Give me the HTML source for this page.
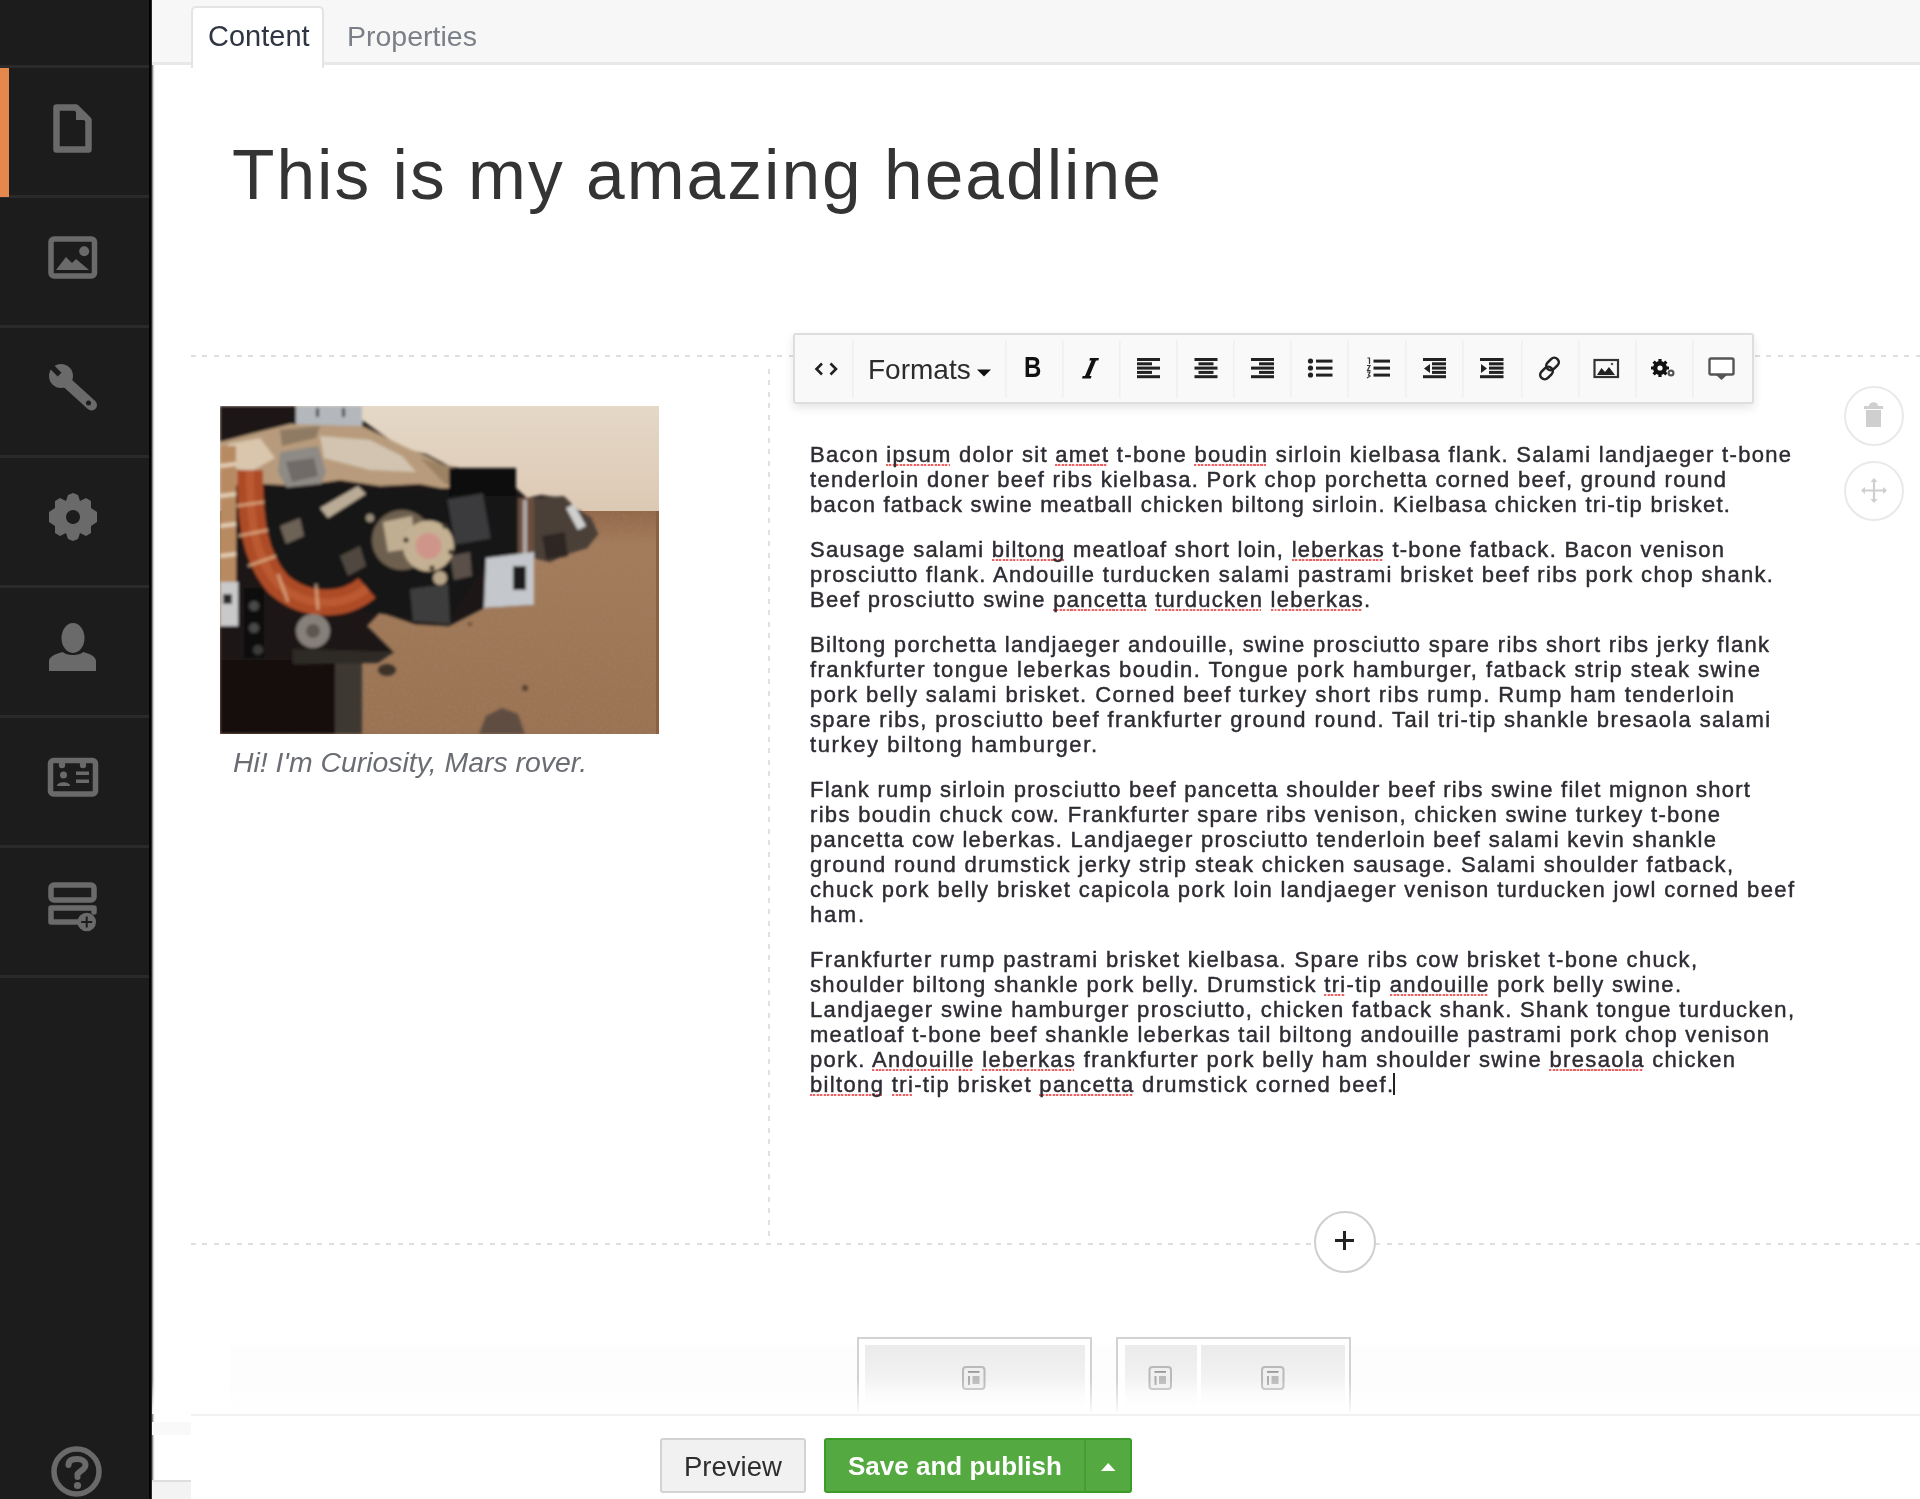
<!DOCTYPE html>
<html><head><meta charset="utf-8">
<style>
html,body{margin:0;padding:0;}
body{width:1920px;height:1499px;overflow:hidden;position:relative;background:#fff;font-family:"Liberation Sans",sans-serif;}
.abs{position:absolute;}
#sb{left:0;top:0;width:149px;height:1499px;background:#1c1c1c;}
#sbedge{left:149px;top:0;width:6px;height:1499px;background:linear-gradient(90deg,#030303 0,#030303 2px,#5a5a5a 3px,#bdbdbd 4px,#ececec 5px,rgba(255,255,255,0) 6px);}
.sep{position:absolute;left:0;width:149px;height:3px;background:#2a2a2a;}
#orange{left:0;top:68px;width:9px;height:129px;background:#e6884d;}
#hdr{left:152px;top:0;width:1768px;height:62px;background:#f7f7f7;border-bottom:3px solid #e8e8e8;}
#tab{left:191px;top:6px;width:129px;height:60px;background:#fff;border:2px solid #e4e4e4;border-bottom:none;border-radius:5px 5px 0 0;}
.tabt{position:absolute;top:20px;font-size:29px;line-height:32px;white-space:nowrap;}
#headline{left:232px;top:134px;font-size:69.5px;line-height:82px;color:#343434;white-space:nowrap;letter-spacing:2.0px;}
.hdash{position:absolute;height:2px;background:repeating-linear-gradient(90deg,#dfdfdf 0 5px,transparent 5px 11.5px);}
.vdash{position:absolute;width:2px;background:repeating-linear-gradient(180deg,#e0e0e0 0 5px,transparent 5px 11.5px);}
#caption{left:233px;top:745px;font-size:28.4px;line-height:34px;font-style:italic;color:#6a6d72;white-space:nowrap;}
#toolbar{left:793px;top:333px;width:957px;height:67px;border-radius:3px;background:#f9f9f9;border:2px solid #dedede;box-shadow:0 4px 10px rgba(0,0,0,0.10);}
.tbsep{position:absolute;top:6px;width:2px;height:58px;background:#f0f0f0;}
.txt{position:absolute;left:810px;font-size:22px;line-height:25px;color:#2f2b33;white-space:nowrap;-webkit-text-stroke:0.45px #2f2b33;}
.sp{background-image:repeating-linear-gradient(90deg,rgba(232,70,70,0.85) 0 2px,rgba(255,160,160,0.5) 2px 3.5px);background-size:calc(100% - 2px) 2px;background-repeat:no-repeat;background-position:0 22px;}
.circ{position:absolute;border-radius:50%;border:2px solid #e9e9e9;background:#fff;box-sizing:border-box;}
</style></head>
<body><div id="wrap" style="position:absolute;left:0;top:0;width:1920px;height:1499px;filter:blur(0.7px);">
<!-- sidebar -->
<div id="sb" class="abs"></div>
<div id="sbedge" class="abs"></div>
<div class="sep" style="top:65px"></div>
<div class="sep" style="top:195px"></div>
<div class="sep" style="top:325px"></div>
<div class="sep" style="top:455px"></div>
<div class="sep" style="top:585px"></div>
<div class="sep" style="top:715px"></div>
<div class="sep" style="top:845px"></div>
<div class="sep" style="top:975px"></div>
<div id="orange" class="abs"></div>
<svg class="abs" style="left:0;top:0" width="149" height="1499" viewBox="0 0 149 1499">
<g fill="none" stroke="#6a6a6a" stroke-linejoin="round" stroke-linecap="round">
<!-- document -->
<path d="M56.5,107.5 L76,107.5 L88.5,120 L88.5,149.5 L56.5,149.5 Z" stroke-width="6.5"/>
<!-- image -->
<rect x="51" y="239" width="43.5" height="37" rx="3" stroke-width="5.5"/>
<!-- gear hole via stroke trick not used -->
<!-- card -->
<rect x="50.5" y="760.5" width="45" height="33.5" rx="3" stroke-width="5.5"/>
<!-- layout -->
<rect x="51" y="885" width="43" height="15" rx="3" stroke-width="5.5"/>
<path d="M77,922 L51,922 L51,908 L94,908 L94,912" stroke-width="5.5"/>
<!-- help -->
<circle cx="76.5" cy="1471.5" r="22.5" stroke-width="5.5"/>
<path d="M68.5,1465 C68.5,1460.5 72.5,1459 77,1459 C82,1459 85.5,1461.5 85.5,1465 C85.5,1469.5 80,1470.5 77.5,1474 L77.5,1477" stroke-width="6"/>
</g>
<g fill="#6a6a6a">
<path d="M76,104.5 L91.5,120 L76,120 Z"/>
<!-- image inner -->
<path d="M56,270 L66,257 L72,263 L76,259 L89,270 Z"/>
<circle cx="84.2" cy="251.2" r="5"/>
<!-- wrench -->
<circle cx="61" cy="376" r="12"/>
<path d="M64,380 L91.5,405" stroke="#6a6a6a" stroke-width="11" stroke-linecap="round"/>
<rect x="58.3" y="361" width="5.4" height="13" fill="#1c1c1c" transform="rotate(-45 61 376)"/>
<circle cx="88.5" cy="403" r="2.5" fill="#1c1c1c"/>
<!-- gear -->
<path fill-rule="evenodd" d="M73,493 L78,495 L80,501 L86,498 L91,501 L91,508 L97,512 L97,522 L91,526 L91,533 L86,536 L80,533 L78,539 L73,541 L68,539 L66,533 L60,536 L55,533 L55,526 L49,522 L49,512 L55,508 L55,501 L60,498 L66,501 L68,495 Z M73,510 A7,7 0 1,0 73.01,510 Z"/>
<!-- user -->
<ellipse cx="73" cy="638" rx="11.5" ry="15"/>
<path d="M49,671 L49,661 C49,656 58,653 63,652 C66,656 80,656 83,652 C88,653 96,656 96,661 L96,671 Z"/>
<!-- card inner -->
<circle cx="62" cy="765" r="3.2"/><circle cx="83" cy="765" r="3.2"/>
<circle cx="63.5" cy="775" r="3.5"/>
<path d="M57,786 C57,781 70,781 70,786 Z"/>
<rect x="76" y="771.5" width="13" height="3.5"/>
<rect x="76" y="779.5" width="13" height="3.5"/>
<!-- layout circle -->
<circle cx="86.7" cy="922" r="9.3"/>
<circle cx="77.5" cy="1485.5" r="3.6"/>
</g>
<path d="M86.7,916.5 L86.7,927.5 M81.2,922 L92.2,922" stroke="#1c1c1c" stroke-width="2"/>
</svg>


<!-- header -->
<div id="hdr" class="abs"></div>
<div id="tab" class="abs"></div>
<div class="tabt" style="left:208px;color:#2f3542;">Content</div>
<div class="tabt" style="left:347px;color:#7b7f87;font-size:28.5px;">Properties</div>

<!-- headline -->
<div id="headline" class="abs">This is my amazing headline</div>

<!-- grid lines -->
<div class="hdash" style="left:191px;top:355px;width:1729px;"></div>
<div class="hdash" style="left:191px;top:1243px;width:1729px;"></div>
<div class="vdash" style="left:768px;top:369px;height:868px;"></div>

<!-- image placeholder -->
<svg class="abs" style="left:220px;top:406px" width="439" height="328" viewBox="0 0 439 328">
<defs>
<linearGradient id="sky" x1="0" y1="0" x2="0" y2="1"><stop offset="0" stop-color="#e5d8c7"/><stop offset="1" stop-color="#dcc9b4"/></linearGradient>
<linearGradient id="gnd" x1="0" y1="0" x2="0" y2="1"><stop offset="0" stop-color="#93694a"/><stop offset="0.15" stop-color="#a37c5c"/><stop offset="1" stop-color="#9a7353"/></linearGradient>
<filter id="bl" x="-5%" y="-5%" width="110%" height="110%"><feGaussianBlur stdDeviation="1.5"/></filter>
<filter id="noise" x="0" y="0" width="100%" height="100%"><feTurbulence type="fractalNoise" baseFrequency="0.35" numOctaves="2" seed="3"/><feColorMatrix values="0 0 0 0 0.35  0 0 0 0 0.24  0 0 0 0 0.16  0 0 0 -1.4 0.75"/></filter>
<clipPath id="ic"><rect width="439" height="328"/></clipPath>
</defs>
<g clip-path="url(#ic)">
<rect width="439" height="106" fill="url(#sky)"/>
<rect y="105" width="439" height="223" fill="url(#gnd)"/>
<rect y="105" width="439" height="223" filter="url(#noise)" opacity="0.55"/>
<rect x="436" y="105" width="3" height="223" fill="#8d6040"/>
<g filter="url(#bl)">
<ellipse cx="167" cy="264" rx="9" ry="6" fill="#3d3028"/>
<circle cx="305" cy="282" r="3" fill="#5a4030"/><circle cx="250" cy="218" r="2" fill="#6a4c38"/>
<!-- main dark mass -->
<path d="M0,0 L142,0 L142,14 L160,27 L183,43 L206,48 L229,60 L275,69 L296,82 L307,92 L321,89 L344,92 L357,103 L371,112 L378,128 L367,142 L344,149 L330,156 L314,152 L314,199 L264,202 L229,220 L195,218 L160,206 L147,220 L174,247 L142,254 L142,328 L0,328 Z" fill="#1d1815"/>
<!-- gray box top -->
<rect x="76" y="0" width="66" height="22" fill="#b4b8bc"/>
<rect x="96" y="2" width="3" height="9" fill="#3a3a3a"/><rect x="122" y="2" width="3" height="9" fill="#3a3a3a"/>
<!-- tan band top of arm -->
<path d="M0,36 L30,28 L70,18 L142,20 L183,40 L206,50 L229,62 L255,70 L240,86 L200,78 L160,80 L120,74 L80,80 L45,78 L0,80 Z" fill="#b89b7c"/>
<path d="M8,38 L40,32 L55,52 L30,66 L6,60 Z" fill="#d9c6ad"/>
<path d="M100,30 L150,34 L182,50 L196,66 L150,64 L104,52 Z" fill="#d2c4b0"/>
<path d="M200,52 L250,66 L262,80 L225,78 Z" fill="#9c8264"/>
<path d="M60,24 L100,20 L96,32 L62,40 Z" fill="#8f7a63"/>
<!-- camera mesh -->
<path d="M60,46 L98,40 L106,66 L96,90 L70,88 L58,66 Z" fill="#8e8a85"/>
<path d="M66,56 L94,52 L98,70 L72,76 Z" fill="#6f6b67"/>
<!-- dark interior -->
<path d="M42,84 L100,78 L160,84 L229,82 L300,90 L314,152 L264,160 L232,212 L195,212 L150,206 L100,200 L42,180 Z" fill="#181412"/>
<path d="M100,102 L138,80 L146,88 L108,112 Z" fill="#b9ab96"/>
<rect x="229" y="62" width="67" height="28" fill="#0f0d0c"/>
<rect x="231" y="90" width="36" height="46" fill="#3a3a3c" transform="rotate(-10 249 113)"/>
<!-- head housing and lens -->
<ellipse cx="182" cy="134" rx="30" ry="30" fill="#6e604f"/>
<path d="M60,120 L80,112 L84,130 L66,138 Z" fill="#6d6257"/><path d="M120,150 L140,140 L146,160 L128,170 Z" fill="#4f4740"/><circle cx="150" cy="112" r="4" fill="#9a8d7a"/><path d="M230,150 L250,146 L252,170 L234,174 Z" fill="#5a5048"/>
<path d="M163,116 L192,110 L195,142 L168,146 Z" fill="#bfae92"/>
<circle cx="208.5" cy="140" r="25.5" fill="#c4b193"/>
<circle cx="208.5" cy="140" r="13" fill="#cf958a"/>
<circle cx="186" cy="134" r="2.6" fill="#3d342b"/><circle cx="231" cy="146" r="2.6" fill="#3d342b"/><circle cx="212" cy="162" r="2.6" fill="#3d342b"/><circle cx="225" cy="120" r="2.6" fill="#3d342b"/>
<circle cx="220" cy="172" r="7" fill="#b8a68a"/>
<!-- right dark with copper cylinder -->
<rect x="298" y="92" width="16" height="62" fill="#6a4e3c"/>
<rect x="303" y="94" width="4" height="58" fill="#c4c4c4" opacity="0.8"/>
<!-- gripper -->
<path d="M314,92 L344,90 L357,103 L371,112 L378,128 L367,142 L344,149 L330,156 L314,152 Z" fill="#4b4139"/>
<path d="M346,102 L354,98 L366,120 L358,124 Z" fill="#cfcfcf"/>
<path d="M322,130 L345,126 L348,150 L326,154 Z" fill="#2f2823"/>
<!-- light bracket -->
<path d="M266,152 L314,146 L314,199 L264,202 Z" fill="#c4c7cb"/>
<rect x="293" y="160" width="13" height="24" fill="#1b1b1b"/>
<path d="M190,183 L228,178 L230,218 L193,215 Z" fill="#3d3d3e"/>
<!-- left edge stripes -->
<path d="M0,40 L16,40 L16,176 L0,176 Z" fill="#b88a62"/><path d="M0,60 L16,58 M0,90 L16,88 M0,120 L16,118 M0,150 L16,148" stroke="#e2cdb4" stroke-width="4"/>
<rect x="0" y="176" width="18" height="44" fill="#c9c9ca"/>
<rect x="3" y="188" width="9" height="10" fill="#2a2a2a"/>
<rect x="24" y="182" width="20" height="70" fill="#0f0c0b"/>
<circle cx="34" cy="200" r="5" fill="#4a4a4a"/><circle cx="34" cy="222" r="5" fill="#4a4a4a"/><circle cx="38" cy="244" r="5" fill="#3a3a3a"/>
<!-- orange cable -->
<path d="M30,64 C30,115 34,150 58,178 C88,204 126,200 147,182" fill="none" stroke="#ad4b27" stroke-width="26"/>
<path d="M30,64 C30,115 34,150 58,178 C88,204 126,200 147,182" fill="none" stroke="#c96a3c" stroke-width="8" opacity="0.5"/>
<path d="M16,100 L44,96 M18,130 L48,124 M28,160 L56,150 M58,168 L68,196 M96,178 L98,204" stroke="#e0b890" stroke-width="3" opacity="0.7"/>
<!-- silver round -->
<circle cx="93" cy="225" r="17" fill="#86807a"/>
<circle cx="93" cy="225" r="7" fill="#5d5650"/>
<!-- column and plate -->
<rect x="0" y="254" width="142" height="74" fill="#14100e"/>
<rect x="115" y="254" width="27" height="74" fill="#3d3733"/>
<path d="M73,243 L174,246 L158,257 L73,258 Z" fill="#2e2a27"/>
<!-- rock -->
<path d="M259,328 L266,310 L282,302 L298,308 L305,328 Z" fill="#5e4e42"/>
</g>
</g>
</svg>

<div id="caption" class="abs">Hi! I'm Curiosity, Mars rover.</div>

<!-- toolbar -->
<div id="toolbar" class="abs"></div>
<svg class="abs" style="left:793px;top:333px" width="961" height="73" viewBox="793 333 961 73">
<g fill="#f0f0f0">
<rect x="852" y="340" width="1.5" height="58"/><rect x="1005" y="340" width="1.5" height="58"/>
<rect x="1062" y="340" width="1.5" height="58"/><rect x="1119" y="340" width="1.5" height="58"/>
<rect x="1176" y="340" width="1.5" height="58"/><rect x="1233" y="340" width="1.5" height="58"/>
<rect x="1290" y="340" width="1.5" height="58"/><rect x="1347" y="340" width="1.5" height="58"/>
<rect x="1405" y="340" width="1.5" height="58"/><rect x="1462" y="340" width="1.5" height="58"/>
<rect x="1521" y="340" width="1.5" height="58"/><rect x="1578" y="340" width="1.5" height="58"/>
<rect x="1635" y="340" width="1.5" height="58"/><rect x="1692" y="340" width="1.5" height="58"/>
</g>
<!-- <> -->
<path d="M822,363.5 L816.5,369 L822,374.5 M830.5,363.5 L836,369 L830.5,374.5" fill="none" stroke="#222" stroke-width="2.6"/>
<!-- caret -->
<path d="M977,369.5 L991,369.5 L984,376.5 Z" fill="#111"/>
<!-- italic I -->
<path d="M1090,358 L1099,358 L1098.3,360.5 L1096,360.5 L1089.5,376 L1091.5,376 L1090.8,378.5 L1082,378.5 L1082.7,376 L1085,376 L1091.5,360.5 L1089.3,360.5 Z" fill="#111"/>
<!-- align left -->
<g fill="#222">
<rect x="1137" y="358" width="23" height="3"/><rect x="1137" y="362.3" width="15" height="3"/><rect x="1137" y="366.6" width="23" height="3"/><rect x="1137" y="370.9" width="15" height="3"/><rect x="1137" y="375.2" width="23" height="3"/>
<!-- align center -->
<rect x="1194.5" y="358" width="23" height="3"/><rect x="1198.5" y="362.3" width="15" height="3"/><rect x="1194.5" y="366.6" width="23" height="3"/><rect x="1198.5" y="370.9" width="15" height="3"/><rect x="1194.5" y="375.2" width="23" height="3"/>
<!-- align right -->
<rect x="1251" y="358" width="23" height="3"/><rect x="1259" y="362.3" width="15" height="3"/><rect x="1251" y="366.6" width="23" height="3"/><rect x="1259" y="370.9" width="15" height="3"/><rect x="1251" y="375.2" width="23" height="3"/>
<!-- bullets -->
<circle cx="1310.5" cy="361" r="2.6"/><circle cx="1310.5" cy="368" r="2.6"/><circle cx="1310.5" cy="375" r="2.6"/>
<rect x="1316" y="359.6" width="16.5" height="3"/><rect x="1316" y="366.6" width="16.5" height="3"/><rect x="1316" y="373.6" width="16.5" height="3"/>
<!-- numbered -->
<rect x="1373.5" y="359.6" width="16.5" height="3"/><rect x="1373.5" y="366.6" width="16.5" height="3"/><rect x="1373.5" y="373.6" width="16.5" height="3"/>
<path d="M1367.5,358 L1369.5,358 L1369.5,364 M1367,365.5 L1370,365.5 L1367.5,370.5 L1370.5,370.5 M1367,372 L1370,372 L1368.5,375 L1370,376 L1367,378" fill="none" stroke="#333" stroke-width="1.2"/>
<!-- outdent -->
<rect x="1423" y="358" width="23" height="3"/><rect x="1432" y="362.3" width="14" height="3"/><rect x="1432" y="366.6" width="14" height="3"/><rect x="1432" y="370.9" width="14" height="3"/><rect x="1423" y="375.2" width="23" height="3"/>
<path d="M1430,364 L1430,373 L1424,368.5 Z"/>
<!-- indent -->
<rect x="1480" y="358" width="23.5" height="3"/><rect x="1489" y="362.3" width="14.5" height="3"/><rect x="1489" y="366.6" width="14.5" height="3"/><rect x="1489" y="370.9" width="14.5" height="3"/><rect x="1480" y="375.2" width="23.5" height="3"/>
<path d="M1481,364 L1481,373 L1487,368.5 Z"/>
</g>
<!-- link -->
<g fill="none" stroke="#222" stroke-width="2.6">
<rect x="1548" y="357" width="9" height="14" rx="4.5" transform="rotate(45 1552.5 364)"/>
<rect x="1542" y="366" width="9" height="14" rx="4.5" transform="rotate(45 1546.5 373)"/>
</g>
<!-- image -->
<rect x="1594.5" y="360" width="23.5" height="17" fill="none" stroke="#333" stroke-width="2.2"/>
<path d="M1597,375 L1601.5,368 L1605,372 L1609,367 L1615,375 Z" fill="#222"/>
<circle cx="1612" cy="364" r="1.3" fill="#555"/>
<!-- gears -->
<g fill="#111">
<circle cx="1660" cy="368" r="7"/>
<g stroke="#111" stroke-width="3.2"><path d="M1660,359 L1660,377 M1651,368 L1669,368 M1653.6,361.6 L1666.4,374.4 M1666.4,361.6 L1653.6,374.4"/></g>
<circle cx="1660" cy="368" r="2.6" fill="#f9f9f9"/>
<circle cx="1671" cy="373" r="3.5" fill="#555"/><circle cx="1671" cy="373" r="1.3" fill="#f9f9f9"/>
</g>
<!-- monitor -->
<rect x="1709.5" y="358.5" width="24" height="16" rx="1.5" fill="#fff" stroke="#555" stroke-width="2.4"/>
<path d="M1716,375 L1727,375 L1721.5,380 Z" fill="#555"/>
</svg>
<div class="abs" style="left:868px;top:354px;font-size:28px;line-height:31px;color:#2c2c2c;white-space:nowrap;">Formats</div>
<div class="abs" style="left:1024px;top:351px;font-size:30px;line-height:31px;font-weight:bold;color:#111;transform:scaleX(0.8);transform-origin:0 0;">B</div>


<!-- text -->
<div id="text">
<div class="txt" style="top:442px;letter-spacing:1.309px">Bacon <span class="sp">ipsum</span> dolor sit <span class="sp">amet</span> t-bone <span class="sp">boudin</span> sirloin kielbasa flank. Salami landjaeger t-bone</div>
<div class="txt" style="top:467px;letter-spacing:1.298px">tenderloin doner beef ribs kielbasa. Pork chop porchetta corned beef, ground round</div>
<div class="txt" style="top:492px;letter-spacing:1.242px">bacon fatback swine meatball chicken biltong sirloin. Kielbasa chicken tri-tip brisket.</div>
<div class="txt" style="top:537px;letter-spacing:1.274px">Sausage salami <span class="sp">biltong</span> meatloaf short loin, <span class="sp">leberkas</span> t-bone fatback. Bacon venison</div>
<div class="txt" style="top:562px;letter-spacing:1.328px">prosciutto flank. Andouille turducken salami pastrami brisket beef ribs pork chop shank.</div>
<div class="txt" style="top:587px;letter-spacing:1.271px">Beef prosciutto swine <span class="sp">pancetta</span> <span class="sp">turducken</span> <span class="sp">leberkas</span>.</div>
<div class="txt" style="top:632px;letter-spacing:1.308px">Biltong porchetta landjaeger andouille, swine prosciutto spare ribs short ribs jerky flank</div>
<div class="txt" style="top:657px;letter-spacing:1.431px">frankfurter tongue leberkas boudin. Tongue pork hamburger, fatback strip steak swine</div>
<div class="txt" style="top:682px;letter-spacing:1.414px">pork belly salami brisket. Corned beef turkey short ribs rump. Rump ham tenderloin</div>
<div class="txt" style="top:707px;letter-spacing:1.366px">spare ribs, prosciutto beef frankfurter ground round. Tail tri-tip shankle bresaola salami</div>
<div class="txt" style="top:732px;letter-spacing:1.614px">turkey biltong hamburger.</div>
<div class="txt" style="top:777px;letter-spacing:1.261px">Flank rump sirloin prosciutto beef pancetta shoulder beef ribs swine filet mignon short</div>
<div class="txt" style="top:802px;letter-spacing:1.316px">ribs boudin chuck cow. Frankfurter spare ribs venison, chicken swine turkey t-bone</div>
<div class="txt" style="top:827px;letter-spacing:1.281px">pancetta cow leberkas. Landjaeger prosciutto tenderloin beef salami kevin shankle</div>
<div class="txt" style="top:852px;letter-spacing:1.356px">ground round drumstick jerky strip steak chicken sausage. Salami shoulder fatback,</div>
<div class="txt" style="top:877px;letter-spacing:1.357px">chuck pork belly brisket capicola pork loin landjaeger venison turducken jowl corned beef</div>
<div class="txt" style="top:902px;letter-spacing:1.693px">ham.</div>
<div class="txt" style="top:947px;letter-spacing:1.369px">Frankfurter rump pastrami brisket kielbasa. Spare ribs cow brisket t-bone chuck,</div>
<div class="txt" style="top:972px;letter-spacing:1.323px">shoulder biltong shankle pork belly. Drumstick <span class="sp">tri</span>-tip <span class="sp">andouille</span> pork belly swine.</div>
<div class="txt" style="top:997px;letter-spacing:1.334px">Landjaeger swine hamburger prosciutto, chicken fatback shank. Shank tongue turducken,</div>
<div class="txt" style="top:1022px;letter-spacing:1.296px">meatloaf t-bone beef shankle leberkas tail biltong andouille pastrami pork chop venison</div>
<div class="txt" style="top:1047px;letter-spacing:1.363px">pork. <span class="sp">Andouille</span> <span class="sp">leberkas</span> frankfurter pork belly ham shoulder swine <span class="sp">bresaola</span> chicken</div>
<div class="txt" style="top:1072px;letter-spacing:1.353px"><span class="sp">biltong</span> <span class="sp">tri</span>-tip brisket <span class="sp">pancetta</span> drumstick corned beef.</div>
</div>

<div class="abs" style="left:1393px;top:1073px;width:2px;height:22px;background:#222;"></div>
<!-- circles -->
<div class="circ" style="left:1844px;top:386px;width:60px;height:60px;"></div>
<div class="circ" style="left:1844px;top:461px;width:60px;height:60px;"></div>
<div class="circ" style="left:1314px;top:1211px;width:62px;height:62px;border:2.5px solid #cfcfcf;"></div>

<!-- circle icons -->
<svg class="abs" style="left:1840px;top:380px" width="70" height="150" viewBox="1840 380 70 150">
<g fill="#cfcfcf">
<rect x="1864" y="406" width="19" height="3"/>
<path d="M1869,406 C1869,401 1878,401 1878,406 Z"/>
<rect x="1866" y="410" width="15" height="17" />
</g>
<path d="M1874,479 L1874,502 M1862,490.5 L1886,490.5" stroke="#cfcfcf" stroke-width="2.2"/>
<path d="M1874,478 L1870.5,482 L1877.5,482 Z M1874,503 L1870.5,499 L1877.5,499 Z M1861,490.5 L1865,487 L1865,494 Z M1887,490.5 L1883,487 L1883,494 Z" fill="#cfcfcf"/>
</svg>
<svg class="abs" style="left:1330px;top:1226px" width="30" height="30" viewBox="1330 1226 30 30">
<path d="M1344.5,1231 L1344.5,1250 M1335,1240.5 L1354,1240.5" stroke="#222" stroke-width="3"/>
</svg>

<!-- layout cards -->
<div class="abs" style="left:230px;top:1345px;width:1690px;height:66px;background:#fdfdfd;"></div>
<div class="abs" style="left:857px;top:1337px;width:235px;height:75px;box-sizing:border-box;border:2px solid #d2d2d2;border-bottom:none;background:#fff;"></div>
<div class="abs" style="left:865px;top:1345px;width:220px;height:62px;background:linear-gradient(#ebebeb,#f0f0f0 40%,#fdfdfd);"></div>
<div class="abs" style="left:1116px;top:1337px;width:235px;height:75px;box-sizing:border-box;border:2px solid #d2d2d2;border-bottom:none;background:#fff;"></div>
<div class="abs" style="left:1125px;top:1345px;width:72px;height:62px;background:linear-gradient(#ebebeb,#f0f0f0 40%,#fdfdfd);"></div>
<div class="abs" style="left:1201px;top:1345px;width:144px;height:62px;background:linear-gradient(#ebebeb,#f0f0f0 40%,#fdfdfd);"></div>
<svg class="abs" style="left:0;top:1330px" width="1920" height="90" viewBox="0 1330 1920 90">
<defs><g id="cic"><rect x="1" y="1" width="21.5" height="22" rx="3" fill="#efefef" stroke="#b9b9b9" stroke-width="2"/><rect x="6" y="5" width="11.5" height="1.8" fill="#999"/><rect x="6" y="10" width="2" height="9" fill="#aaa"/><rect x="10.5" y="10" width="7" height="8" fill="#bbb"/></g></defs>
<use href="#cic" x="962" y="1366"/>
<use href="#cic" x="1148.5" y="1366"/>
<use href="#cic" x="1261" y="1366"/>
</svg>
<div class="abs" style="left:152px;top:1380px;width:1768px;height:34px;background:linear-gradient(rgba(255,255,255,0),rgba(255,255,255,0.92));"></div>
<div class="abs" style="left:191px;top:1414px;width:1729px;height:2px;background:#f1f1f1;"></div>
<div class="abs" style="left:152px;top:1422px;width:39px;height:13px;background:#f9f9f9;"></div>
<div class="abs" style="left:152px;top:1480px;width:39px;height:2px;background:#dedede;"></div>
<div class="abs" style="left:152px;top:1482px;width:39px;height:17px;background:#f3f3f3;"></div>

<!-- buttons -->
<div class="abs" style="left:660px;top:1438px;width:146px;height:55px;box-sizing:border-box;background:#f1f1f1;border:2px solid #d3d3d3;border-radius:3px;"></div>
<div class="abs" style="left:684px;top:1451px;font-size:27.5px;line-height:31px;color:#2e2e2e;white-space:nowrap;">Preview</div>
<div class="abs" style="left:824px;top:1438px;width:308px;height:55px;box-sizing:border-box;background:#54aa40;border:2px solid #3d9c27;border-radius:3px;"></div>
<div class="abs" style="left:1084px;top:1440px;width:1.5px;height:51px;background:#479a34;"></div>
<div class="abs" style="left:848px;top:1451px;font-size:26px;line-height:31px;font-weight:bold;color:#fff;white-space:nowrap;">Save and publish</div>
<svg class="abs" style="left:1095px;top:1455px" width="30" height="25" viewBox="1095 1455 30 25"><path d="M1101,1471 L1115.5,1471 L1108.2,1463 Z" fill="#fff"/></svg>

</div></body></html>
